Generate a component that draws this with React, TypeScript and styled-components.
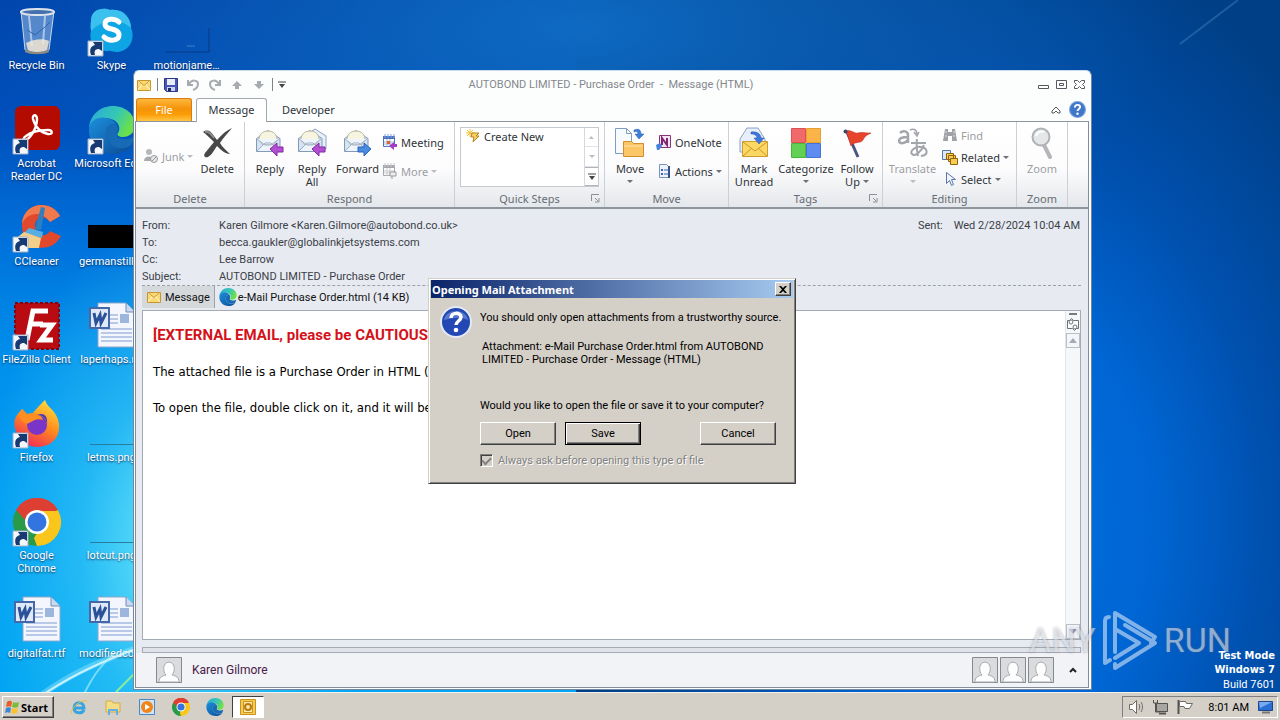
import React from "react";
import styled, { createGlobalStyle, css } from "styled-components";

const Global = createGlobalStyle`
  * { box-sizing: border-box; }
  html, body { margin: 0; height: 100%; overflow: hidden; }
  body, button, input { font-family: "Noto Sans", "Open Sans", sans-serif; font-size: 11px; line-height: 13px; }
  button { margin: 0; padding: 0; border: 0; background: none; color: inherit; cursor: default; }
  p, h1, h2, dl, dd, dt, ul { margin: 0; padding: 0; }
  svg { display: block; flex: none; }
`;
const tahoma = css`
  font-family: "Roboto", "Noto Sans", sans-serif;
`;

/* ---------- desktop ---------- */
const Screen = styled.div`
  height: 100vh;
  display: flex;
  flex-direction: column;
  overflow: hidden;
`;
const Desktop = styled.main`
  position: relative;
  flex: 1;
  min-height: 0;
  overflow: hidden;
  background:
    radial-gradient(ellipse 200px 330px at 180px 550px, rgba(120, 240, 250, 0.95), rgba(70, 212, 248, 0.5) 50%, rgba(30, 180, 245, 0) 100%),
    radial-gradient(ellipse 600px 240px at 45% 4%, rgba(14, 106, 194, 1), rgba(12, 98, 186, 0.6) 50%, rgba(10, 90, 180, 0) 100%),
    linear-gradient(180deg, #0044ac 0%, #0050bc 18%, #0070da 34%, #0090ec 52%, #009cf2 70%, #00a4f2 100%) left / 45% 100% no-repeat,
    radial-gradient(ellipse 420px 600px at 78% 75%, #0072e0 0%, #0066d4 36%, #0050ae 64%, #003f86 100%);
`;
const Streaks = styled.svg`
  position: absolute;
  left: 0;
  bottom: 0;
`;
const Beam = styled.svg`
  position: absolute;
  right: 0;
  top: 0;
`;
const IconColumns = styled.ul`
  height: 100%;
  display: grid;
  grid-auto-flow: column;
  grid-template-rows: repeat(7, 98px);
  grid-auto-columns: 75px;
  list-style: none;
`;
const Shortcut = styled.li`
  width: 73px;
  padding-top: 8px;
  display: flex;
  flex-direction: column;
  align-items: center;
  gap: 3px;
  color: #fff;
  text-align: center;
  white-space: pre;
  text-shadow: 0 1px 2px rgba(0, 20, 60, 0.8);
  ${tahoma}
`;
const Build = styled.div`
  position: absolute;
  right: 5px;
  bottom: 0;
  color: #fff;
  text-align: right;
  font-family: "DejaVu Sans Condensed", "DejaVu Sans", sans-serif;
  line-height: 14px;
  strong { display: block; }
  span { display: block; line-height: 15px; ${tahoma} }
`;
const Watermark = styled.div`
  position: absolute;
  right: 49px;
  bottom: 20px;
  display: flex;
  align-items: center;
  gap: 5px;
  color: rgba(255, 255, 255, 0.5);
  font: 34px/64px "Roboto", sans-serif;
  text-shadow: 0 0 3px rgba(90, 100, 120, 0.5);
  pointer-events: none;
`;

/* ---------- message window ---------- */
const MailWindow = styled.section`
  position: absolute;
  left: 133px;
  right: 188px;
  top: 70px;
  bottom: 2px;
  display: flex;
  flex-direction: column;
  background: #fcfdfd;
  border: 1px solid #6d87a5;
  border-top-color: #c9dcee;
  border-radius: 6px 6px 0 0;
  padding: 0 2px 1px 1px;
  overflow: hidden;
`;
const TitleBar = styled.header`
  height: 27px;
  flex: none;
  display: grid;
  grid-template-columns: 1fr auto 1fr;
  align-items: center;
  padding: 0 3px 1px 1px;
`;
const QuickAccess = styled.div`
  display: flex;
  align-items: center;
  gap: 6px;
  padding-top: 1px;
`;
const Divider = styled.i`
  width: 1px;
  height: 13px;
  margin: 0 -1px;
  background: #7d838b;
`;
const WindowTitle = styled.h1`
  font-size: 11px;
  font-weight: 400;
  color: #85888d;
  white-space: pre;
  ${tahoma}
`;
const WindowButtons = styled.div`
  justify-self: end;
  display: flex;
  gap: 5px;
`;
const TabRow = styled.nav`
  height: 24px;
  flex: none;
  display: flex;
  align-items: flex-end;
  gap: 4px;
  padding: 0 3px 0 1px;
  border-bottom: 1px solid #8e949c;
`;
const Tab = styled.button<{ $kind?: "file" | "active" }>`
  height: 23px;
  padding: 0 10px 2px;
  color: #2f3439;
  border: 1px solid transparent;
  border-bottom: 0;
  border-radius: 3px 3px 0 0;
  ${(p) => p.$kind === "file" && css`
    width: 56px;
    color: #fff;
    background: linear-gradient(#fdb73c, #f59309 45%, #fb9d06 70%, #ffc545);
    border-color: #d77b13;
  `}
  ${(p) => p.$kind === "active" && css`
    height: 24px;
    width: 71px;
    margin-bottom: -1px;
    background: #fff;
    border-color: #a4a9b0;
  `}
`;
const TabTools = styled.div`
  margin-left: auto;
  align-self: center;
  display: flex;
  align-items: center;
  gap: 8px;
`;
const Frame = styled.div`
  flex: 1;
  min-height: 0;
  display: flex;
  flex-direction: column;
  border: 1px solid #868d97;
  border-top: 0;
  background: #e7ebf1;
`;
const Ribbon = styled.div`
  height: 87px;
  flex: none;
  display: flex;
  overflow: hidden;
  background: linear-gradient(#ffffff, #fcfcfd 55%, #e4e7eb);
  border-bottom: 2px solid #8f959d;
`;
const Group = styled.section<{ $w: number }>`
  width: ${(p) => p.$w}px;
  flex: none;
  display: flex;
  flex-direction: column;
  border-right: 1px solid #ccd0d5;
`;
const GroupBody = styled.div<{ $gap?: number; $pad?: number }>`
  flex: 1;
  min-height: 0;
  display: flex;
  align-items: flex-start;
  gap: ${(p) => p.$gap ?? 4}px;
  padding: 5px ${(p) => p.$pad ?? 4}px 0;
`;
const GroupName = styled.h2`
  height: 16px;
  padding: 0 4px 1px;
  display: grid;
  grid-template-columns: 1fr auto 1fr;
  align-items: center;
  text-align: center;
  font-size: 11px;
  font-weight: 400;
  color: #676c73;
  span { grid-column: 2; }
  svg { justify-self: end; }
`;
const Big = styled.button<{ $w: number; $off?: boolean }>`
  width: ${(p) => p.$w}px;
  display: flex;
  flex-direction: column;
  align-items: center;
  gap: 3px;
  color: ${(p) => (p.$off ? "#9b9ea3" : "#303438")};
  white-space: nowrap;
`;
const BigLabel = styled.span`
  display: flex;
  flex-direction: column;
  align-items: center;
`;
const Inline = styled.span`
  display: flex;
  align-items: center;
  gap: 3px;
`;
const SmallStack = styled.div<{ $gap: number; $top: number }>`
  display: flex;
  flex-direction: column;
  align-items: flex-start;
  gap: ${(p) => p.$gap}px;
  padding-top: ${(p) => p.$top}px;
`;
const Small = styled.button<{ $off?: boolean }>`
  height: 16px;
  display: flex;
  align-items: center;
  gap: 3px;
  color: ${(p) => (p.$off ? "#9b9ea3" : "#303438")};
  white-space: nowrap;
`;
const Caret = styled.i<{ $off?: boolean }>`
  border: 3px solid transparent;
  border-top-color: ${(p) => (p.$off ? "#b9bcc0" : "#6b7077")};
  border-bottom: 0;
`;
const CaretRow = styled.span`
  height: 13px;
  display: grid;
  place-content: center;
`;
const Gallery = styled.div`
  flex: 1;
  height: 60px;
  display: flex;
  background: #fff;
  border: 1px solid #c6cacf;
`;
const GalleryItem = styled.div`
  flex: 1;
  padding: 0 4px;
`;
const GallerySide = styled.div`
  width: 14px;
  display: grid;
  grid-template-rows: repeat(3, 1fr);
  border-left: 1px solid #d5d8dc;
`;
const GalleryArrow = styled.button<{ $on?: boolean }>`
  display: grid;
  place-content: center;
  border-bottom: 1px solid ${(p) => (p.$on ? "#b0b5bb" : "#e1e3e6")};
  border-top: 1px solid ${(p) => (p.$on ? "#b0b5bb" : "transparent")};
`;

const Envelope = styled.div`
  flex: none;
  display: flex;
  justify-content: space-between;
  margin: 0 7px 0 6px;
  padding: 8px 1px 0 0;
  color: #3b4048;
  line-height: 17px;
  border-bottom: 1px dashed #9ba1aa;
  ${tahoma}
`;
const Fields = styled.dl`
  display: grid;
  grid-template-columns: 77px auto;
`;
const Sent = styled.p`
  display: flex;
  gap: 11px;
  white-space: nowrap;
`;
const Attachments = styled.div`
  flex: none;
  height: 24px;
  margin: 0 6px;
  display: flex;
  color: #111;
`;
const AttachTab = styled.button<{ $on?: boolean }>`
  height: 22px;
  display: flex;
  align-items: center;
  gap: ${(p) => (p.$on ? 3 : 1)}px;
  padding: 0 4px;
  background: ${(p) => (p.$on ? "#d5d9dc" : "transparent")};
  border-right: 1px solid ${(p) => (p.$on ? "#9ba1aa" : "transparent")};
  white-space: nowrap;
  ${tahoma}
`;
const Reading = styled.div`
  flex: 1;
  min-height: 0;
  margin: 0 7px 0 6px;
  display: flex;
  background: #fff;
  border: 1px solid #a5abb5;
`;
const Article = styled.article`
  flex: 1;
  padding: 14px 10px;
  color: #000;
  font-family: "DejaVu Sans Condensed", "DejaVu Sans", sans-serif;
  font-size: 13px;
  line-height: 18px;
  white-space: nowrap;
  overflow: hidden;
  p { margin-bottom: 18px; }
`;
const Caution = styled.p`
  color: #d3121a;
  font: bold 15px/20px "Roboto", Arial, sans-serif;
`;
const Scroll = styled.div`
  width: 15px;
  display: flex;
  flex-direction: column;
  align-items: center;
  background: #f6f7f9;
  border-left: 1px solid #e3e5e9;
`;
const ScrollKnob = styled.button`
  width: 14px;
  height: 15px;
  display: grid;
  place-content: center;
  background: #f4f6f9;
  border: 1px solid #b9bfc9;
`;
const Spacer = styled.div`
  flex: 1;
`;
const Splitter = styled.div`
  flex: none;
  height: 6px;
  margin: 7px 7px 0 6px;
  border: 1px solid #a5abb5;
  background: #dfe3e9;
`;
const People = styled.footer`
  flex: none;
  height: 34px;
  display: flex;
  align-items: center;
  gap: 2px;
  padding: 0 7px 0 20px;
  background: #f1f3f6;
  color: #4a1a4a;
  span { margin-left: 8px; font-size: 12px; ${tahoma} }
  button { width: 16px; margin-left: 9px; display: grid; place-content: center; }
`;

/* ---------- dialog ---------- */
const Dialog = styled.section`
  position: absolute;
  left: 428px;
  top: 278px;
  width: 368px;
  padding: 1px 1px 16px;
  background: #d4d0c8;
  border: 1px solid;
  border-color: #d4d0c8 #404040 #404040 #d4d0c8;
  box-shadow: inset 1px 1px #fff, inset -1px -1px #808080;
  color: #000;
`;
const DialogTitle = styled.header`
  height: 18px;
  display: flex;
  align-items: center;
  justify-content: space-between;
  margin: 0 1px 2px;
  padding: 0 2px 0 1px;
  color: #fff;
  font-weight: 700;
  background: linear-gradient(90deg, #0a246a, #a6caf0);
`;
const raised = css`
  background: #d4d0c8;
  border: 1px solid;
  border-color: #fff #404040 #404040 #fff;
  box-shadow: inset -1px -1px #808080;
`;
const CloseBox = styled.button`
  width: 16px;
  height: 14px;
  display: grid;
  place-content: center;
  ${raised}
`;
const DialogBody = styled.div`
  display: grid;
  grid-template-columns: 32px minmax(0, 1fr);
  column-gap: 8px;
  padding: 6px 18px 0 10px;
  ${tahoma}
`;
const Copy = styled.div`
  padding-top: 5px;
  p { white-space: nowrap; }
`;
const Attached = styled.div`
  height: 42px;
  margin: 16px 10px 17px 2px;
`;
const Actions = styled.div`
  display: flex;
  gap: 9px;
  margin-top: 10px;
`;
const ClassicButton = styled.button<{ $focus?: boolean; $end?: boolean }>`
  width: 76px;
  height: 23px;
  ${tahoma}
  ${raised}
  ${(p) => p.$focus && css`border-color: #000; box-shadow: inset 1px 1px #fff, inset -1px -1px #404040, inset -2px -2px #808080;`}
  ${(p) => p.$end && css`margin-left: auto;`}
`;
const Ask = styled.label`
  display: flex;
  align-items: center;
  gap: 5px;
  margin-top: 9px;
  color: #808080;
  text-shadow: 1px 1px #fff;
  input {
    appearance: none;
    width: 13px;
    height: 13px;
    margin: 0;
    display: grid;
    place-content: center;
    border: 1px solid;
    border-color: #808080 #fff #fff #808080;
    box-shadow: inset 1px 1px #404040;
  }
  input::before {
    content: "";
    width: 7px;
    height: 4px;
    margin-bottom: 1px;
    border: solid #808080;
    border-width: 0 0 2px 2px;
    transform: rotate(-45deg);
  }
`;

/* ---------- taskbar ---------- */
const Taskbar = styled.footer`
  flex: none;
  height: 28px;
  display: flex;
  align-items: center;
  padding: 1px 2px 0;
  background: #d4d0c8;
  border-top: 1px solid #f4f2ec;
`;
const Start = styled.button`
  width: 52px;
  height: 22px;
  display: flex;
  align-items: center;
  gap: 1px;
  padding-left: 1px;
  margin-right: 8px;
  font-weight: 700;
  ${raised}
`;
const Task = styled.button<{ $on?: boolean }>`
  width: ${(p) => (p.$on ? 32 : 34)}px;
  height: 22px;
  display: grid;
  place-content: center;
  ${(p) => p.$on && css`
    background: #fff;
    border: 1px solid;
    border-color: #404040 #fff #fff #404040;
  `}
`;
const Tray = styled.div`
  height: 22px;
  margin-left: auto;
  display: flex;
  align-items: center;
  gap: 7px;
  padding: 0 2px 0 5px;
  border: 1px solid;
  border-color: #808080 #fff #fff #808080;
  ${tahoma}
  time { margin: 0 1px 0 8px; }
`;

/* ---------- drawings ---------- */
const Arrow = () => (
  <g>
    <path d="M0 33h15v15H0z" fill="#f4f7fb" stroke="#9db0c8" />
    <path d="M3 47c-2-6 0-9 4-10l-2-3h9v9l-3-2c-4 0-5 2-4 6z" fill="#173a72" />
  </g>
);
const D = ({ children, link }: { children?: React.ReactNode; link?: boolean }) => (
  <svg width="48" height="48" viewBox="0 0 48 48" overflow="visible" aria-hidden="true">
    {children}
    {link && <Arrow />}
  </svg>
);
const EdgeShape = ({ id }: { id: string }) => (
  <g>
    <defs>
      <linearGradient id={id + "a"} x1="0" y1="0" x2="1" y2=".4">
        <stop offset="0" stopColor="#2aa7dc" /><stop offset=".6" stopColor="#35c7b6" /><stop offset="1" stopColor="#6be04a" />
      </linearGradient>
      <linearGradient id={id + "b"} x1="0" y1="0" x2="1" y2="1">
        <stop offset="0" stopColor="#1c8fdc" /><stop offset="1" stopColor="#0c4a94" />
      </linearGradient>
    </defs>
    <path d="M1 22C2 9 12 0 25 0c13 0 22 9 22 19 0 8-6 12-12 12-4 0-7-2-5-4 3-4 1-12-7-14C14 10 4 14 1 22z" fill={`url(#${id}a)`} />
    <path d="M1 22c1-8 10-12 18-10 5 1 8 4 9 6-7-1-11 5-10 11 1 8 8 14 18 13 3 0 6-2 8-3-4 6-11 9-19 9C11 48 0 37 1 22z" fill={`url(#${id}b)`} />
    <path d="M18 29c-1-6 2-11 10-11 3 4 2 7 1 9-1 3 1 6 8 6 4 0 6-1 9-2-1 5-3 9-6 10-11 4-21-3-22-12z" fill="#176bb5" />
  </g>
);
const ChromeShape = () => (
  <g>
    <path d="M24 24 3.200 12A24 24 0 0 1 44.800 12z" fill="#dd4032" />
    <path d="M24 24 44.800 12A24 24 0 0 1 24 48z" fill="#fbc61c" />
    <path d="M24 24 24 48A24 24 0 0 1 3.200 12z" fill="#2a9a48" />
    <path d="M24 13h20.800L34 30 24 48l-3-8 9-14z" fill="#fbc61c" />
    <path d="M3.200 12A24 24 0 0 1 44.800 12H24l-10 12z" fill="#dd4032" />
    <circle cx="24" cy="24" r="12" fill="#fff" /><circle cx="24" cy="24" r="9.500" fill="#3374e0" />
  </g>
);
const WordDoc = () => (
  <D>
    <path d="M10 1h28l9 9v35H10z" fill="#f3f7fd" stroke="#8fa6cc" />
    <path d="M38 1v9h9" fill="#cbd9ef" stroke="#6f8cbc" />
    <path d="M22 13h8M22 17h8M22 21h8M13 27h31M13 31h31M13 35h31M13 39h31" stroke="#7d9bd0" />
    <path d="M32 12h9v9h-9z" fill="#9db6de" />
    <path d="M2 6h19v20H2z" fill="#dfe9f8" stroke="#4668a8" strokeWidth="2" />
    <path d="M6 11l2 10 4-8 1 8 5-10" fill="none" stroke="#2b519b" strokeWidth="3" />
  </D>
);
const Bin = () => (
  <D>
    <path d="M8 3l4 39c4 4 20 4 24 0l5-39z" fill="#a9c6e6" fillOpacity=".5" stroke="#c7d7e8" />
    <path d="M13 35l2 7c5 3 13 3 19 0l2-9c-6-3-15-2-23 2z" fill="#dcd8d0" />
    <path d="M12 41c4 4 20 4 24 0v3c-5 3-19 3-24 0z" fill="#8c8a80" />
    <path d="M16 8l3 30M32 8l-2 28" stroke="#e5eff8" strokeOpacity=".6" strokeWidth="2" />
    <path d="M14 22l8 5 10-8 5-5" stroke="#2d66b4" fill="none" />
    <ellipse cx="24.500" cy="4" rx="16.500" ry="3" fill="#456fae" stroke="#dce3ea" strokeWidth="2" />
  </D>
);
const Skype = () => (
  <D link>
    <path d="M3 13C3 1 15-1 22 2c13-2 21 8 21 18 4 8 1 22-13 24-6 0-8-2-10-1C8 43 0 34 3 23c-1-4-1-7 0-10z" fill="#0ea5e5" />
    <path d="M3 13C3 1 15-1 22 2c13-2 21 8 21 18C30 8 14 12 3 23z" fill="#3cc0ee" />
    <path d="M31 14c-4-4-14-4-14 2 0 7 14 3 14 11 0 6-10 7-15 2" fill="none" stroke="#fff" strokeWidth="5" strokeLinecap="round" />
  </D>
);
const Acrobat = () => (
  <D link>
    <rect x="2" y="0" width="45" height="44" rx="6" fill="#b30b00" />
    <path d="M12 34c4 0 12-11 12-21 0-5-5-5-4 0 2 8 8 14 15 15 5 1 5-4 0-4-9 0-17 2-22 6-3 2-3 4-1 4z" fill="none" stroke="#fff" strokeWidth="2.400" />
  </D>
);
const CCleaner = () => (
  <D link>
    <path d="M47 12C38-5 10-2 9 20c-1 24 28 33 39 12l-11-5c-5 8-15 4-15-5 0-10 11-11 15-4z" fill="#e2492c" />
    <path d="M47 12C38-5 10-2 9 20c5-12 20-14 28-2z" fill="#f07a4e" />
    <path d="M28 3l4 1-4 22-6-1z" fill="#2e7fbd" /><path d="M16 24l14 4-1 6-18-5z" fill="#58aee0" />
    <path d="M11 28l17 6-2 10H12L1 36z" fill="#f2d08c" />
  </D>
);
const FileZilla = () => (
  <D link>
    <path d="M2 1h44v46H2z" fill="#b90b12" stroke="#8d0006" strokeWidth="2" strokeDasharray="3 2" />
    <path d="M14 38 20 9h15M17 22h13" fill="none" stroke="#fff" strokeWidth="5" />
    <path d="M27 23h12L28 38h12" fill="none" stroke="#fff" strokeWidth="5" />
  </D>
);
const Firefox = () => (
  <D link>
    <defs><linearGradient id="ff" x1=".8" y1="0" x2=".3" y2="1"><stop offset="0" stopColor="#ffe03c" /><stop offset=".5" stopColor="#ff8a1e" /><stop offset="1" stopColor="#f0285a" /></linearGradient></defs>
    <path d="M9 9l5 5 6-1c2-3 7-8 12-13 2 6 6 8 9 12 6 8 7 18 2 26-8 12-30 12-37-1C-1 27 1 17 5 14z" fill="url(#ff)" />
    <circle cx="24" cy="25" r="10" fill="#7a35c8" />
    <path d="M5 14l4-5 5 5c8-2 14 0 16 6-6-2-10 1-14 3-3 2-7-1-11-9z" fill="#ff8e22" />
    <path d="M24 15c6 0 10 5 10 10 1-8-2-13-10-10z" fill="#4f3cb8" />
  </D>
);
const Chrome = () => <D link><ChromeShape /></D>;
const Edge = () => <D link><EdgeShape id="ed" /></D>;
const Black = () => <D><path d="M0 21h48v23H0z" fill="#000" /></D>;
const Faint = () => <D><path d="M2 44h44V20" fill="none" stroke="#083a86" /><path d="M24 38h8" stroke="#3f7fd0" /></D>;
const Rule = () => <D><path d="M2 44.500h46" stroke="#2a7c9c" /></D>;

const Mail16 = () => (
  <svg width="16" height="16" aria-hidden="true">
    <path d="M1.500 3.500h13v10h-13z" fill="#fbd970" stroke="#c7962f" />
    <path d="M2 4l6 5 6-5M2 13l4-5M14 13l-4-5" fill="none" stroke="#fff8dc" /><path d="M2 3.500l6 5 6-5" fill="none" stroke="#c7962f" />
  </svg>
);
const Env = ({ back, fwd }: { back?: boolean; fwd?: boolean }) => (
  <svg width="32" height="32" aria-hidden="true">
    {back && <path d="M9 9l10-7 11 7v13H12z" fill="#e8f0f9" stroke="#8ea4c0" />}
    <path d="M2.500 11.500 14 3.500l12 8v13h-23.500z" fill="#d6e3f3" stroke="#8199bb" />
    <path d="M5 13c0-5 3-9 9-9s9 4 9 9l-4 5H9z" fill="#f7f4df" stroke="#b9b79d" />
    <path d="M3 24l8-8h6l8 8M3 12l8 6h6l8-6" fill="#edf4fb" stroke="#9cb1cc" />
    {fwd
      ? <path d="M16 20h6v-4l7 6-7 7v-4h-6z" fill="#4a8de0" stroke="#2a62b8" />
      : <path d="M29 20h-6v-4l-7 6 7 7v-4h6z" fill="#b14fd0" stroke="#8427a8" />}
  </svg>
);
const DeleteX = () => (
  <svg width="32" height="32" aria-hidden="true">
    <path d="M2 5c4-3 8-1 11 4l3 4C21 7 26 3 31 1c-4 5-9 10-12 15 3 5 7 8 10 11-5 0-9-4-13-8-3 4-5 9-9 11-3 1-5-1-3-4 3-4 6-7 9-11C9 11 6 8 2 5z" fill="#484848" />
    <path d="M4 5c4-1 7 3 9 6" stroke="#8d8d8d" strokeWidth="2" fill="none" />
  </svg>
);
const Junk = () => (
  <svg width="16" height="16" aria-hidden="true"><circle cx="6" cy="4" r="3" fill="#b6b8bb" /><path d="M1 13c0-6 9-6 9 0z" fill="#a8aaad" /><circle cx="11" cy="11" r="3.500" fill="#e6e7e8" stroke="#96989b" /><path d="M8.500 13.500l5-5" stroke="#96989b" /></svg>
);
const Cal = ({ off }: { off?: boolean }) => (
  <svg width="16" height="16" aria-hidden="true">
    <path d="M1.500 2.500h11v10h-11z" fill="#fff" stroke={off ? "#a4a6a9" : "#4a72bd"} />
    <path d="M1 2h12v3H1z" fill={off ? "#a4a6a9" : "#4a72bd"} /><path d="M3 0v4M6 0v4M9 0v4M12 0v4" stroke={off ? "#c8c9cb" : "#7fa3dd"} />
    <path d="M2 8h10M2 10h10M5 5v8M8 5v8" stroke={off ? "#c8c9cb" : "#9fb7dd"} />
    {off ? <path d="M8 9h6v4H8zM10 13v3" fill="#eee" stroke="#97999c" /> : <><path d="M5 7h3v3H5z" fill="#e0622c" /><path d="M15 10h-3V8l-5 4 5 4v-3h3z" fill="#a53cc4" /></>}
  </svg>
);
const Floppy = () => (
  <svg width="16" height="16" aria-hidden="true"><path d="M1.500 1.500h13v13h-11l-2-2z" fill="#4a55b8" stroke="#2d3687" /><path d="M4 2h8v6H4z" fill="#e8edf8" /><path d="M4 10h8v4H4z" fill="#c9d2ea" /><path d="M5 11h3v3H5z" fill="#1f2866" /></svg>
);
const Undo = ({ flip }: { flip?: boolean }) => (
  <svg width="16" height="16" aria-hidden="true"><g transform={flip ? "translate(16) scale(-1 1)" : undefined}><path d="M3 3v5h5M4 7c3-5 9-4 9 0 0 3-2 5-5 6" fill="none" stroke="#a7aaae" strokeWidth="2" /></g></svg>
);
const Tri = ({ down }: { down?: boolean }) => (
  <svg width="16" height="16" aria-hidden="true"><path d={down ? "M6 4h4v3h3l-5 5-5-5h3z" : "M6 12h4V9h3L8 4 3 9h3z"} fill="#a7aaae" /></svg>
);
const More = () => <svg width="8" height="7" aria-hidden="true"><path d="M0 1h8" stroke="#444" /><path d="M1 3h6L4 7z" fill="#444" /></svg>;
const MoveIcon = () => (
  <svg width="32" height="32" aria-hidden="true"><path d="M1.500 1.500h11l5 5v20h-16z" fill="#f8fbfe" stroke="#7f9cc4" /><path d="M12.500 1.500v5h5" fill="none" stroke="#7f9cc4" /><path d="M9.500 29.500v-15h8l2 2h10v13z" fill="#fbc766" stroke="#d08f2b" /><path d="M10 19h19" stroke="#fde3ac" /><path d="M20 3c5-2 7 0 7 4h3l-5 5-4-5h3c0-2-1-3-4-2z" fill="#3d7fd8" stroke="#2459ac" strokeWidth=".5" /></svg>
);
const OneNote = () => (
  <svg width="16" height="16" aria-hidden="true"><path d="M3.500 1.500h11v12h-11z" fill="#f5e3f2" stroke="#84357c" /><path d="M6 11V4l5 7V4" fill="none" stroke="#7c2674" strokeWidth="2" /><path d="M0 11l4-2 2 3-3 4H1z" fill="#4682dc" /></svg>
);
const ActionsIcon = () => (
  <svg width="16" height="16" aria-hidden="true"><path d="M3.500 1.500h7l3 3v10h-10z" fill="#eef3fb" stroke="#7a93bd" /><path d="M5 6h2v2H5zM5 10h2v2H5z" fill="#3b64ae" /><path d="M8 7h4M8 11h4" stroke="#3b64ae" /><path d="M13 3v12" stroke="#31518c" strokeWidth="2" /></svg>
);
const Unread = () => (
  <svg width="32" height="32" aria-hidden="true"><path d="M2 12 9 1h11l7 11v13H2z" fill="#e7effa" stroke="#8ca2c4" /><path d="M4.500 14.500h25v15h-25z" fill="#fbd764" stroke="#cf9c30" /><path d="M5 15l12 9 12-9M5 29l9-8M29 29l-9-8" fill="none" stroke="#c9952c" /><path d="M13 5c7-1 10 3 10 6h3l-5 6-5-6h3c0-2-2-4-6-4z" fill="#3f78dc" stroke="#244fa8" strokeWidth=".5" /></svg>
);
const Categories = () => (
  <svg width="32" height="32" aria-hidden="true"><path d="M1.500 1.500h14v14h-14z" fill="#f0696b" stroke="#e04f52" /><path d="M16.500 1.500h14v14h-14z" fill="#fbb447" stroke="#e5a033" /><path d="M1.500 16.500h14v14h-14z" fill="#62cf55" stroke="#48b53d" /><path d="M16.500 16.500h14v14h-14z" fill="#5f8cf0" stroke="#4673d9" /></svg>
);
const Flag = () => (
  <svg width="32" height="32" aria-hidden="true"><path d="M6 5l11 25" stroke="#4a567e" strokeWidth="3" /><path d="M5 4c5-2 8 3 12 2 4-1 6 0 13 0-4 2-6 3-8 7-3 4-9 1-12 6z" fill="#e8432b" stroke="#b52617" strokeWidth=".5" /><circle cx="4.500" cy="4.500" r="2" fill="#39456c" /></svg>
);
const TranslateIcon = () => (
  <svg width="32" height="32" aria-hidden="true"><g fill="none" stroke="#a2a5a9" strokeWidth="2.500"><path d="M3 6c3-3 8-2 8 2v8M11 10c-5 0-9 1-9 4s6 3 9-1" /><path d="M14 16h15M20 12c-1 6 0 12 1 17M27 18c-3 7-9 12-12 9s4-8 9-7c7 1 8 8 0 9" strokeWidth="2" /><path d="M13 3c4-2 7 0 7 4M17 5l3 4 2-4" strokeWidth="1.500" /></g></svg>
);
const Find = () => (
  <svg width="16" height="16" aria-hidden="true"><path d="M3 2h3v3h4V2h3l2 12h-5V9H6v5H1z" fill="#9fa2a6" /><path d="M3 9h2M11 9h2M4 4v2M12 4v2" stroke="#ddd" /></svg>
);
const RelatedIcon = () => (
  <svg width="16" height="16" aria-hidden="true"><path d="M.500 1.500h8v9h-8z" fill="#dbe7f8" stroke="#5778ac" /><path d="M4.500 4.500h7v6h-7zM6.500 6.500h7v6h-7z" fill="#f9cc50" stroke="#8e6410" /><path d="M8.500 9.500h7v6h-7z" fill="#f9cc50" stroke="#8e6410" /></svg>
);
const Pointer = () => <svg width="16" height="16" aria-hidden="true"><path d="M4.500 1.500v11l3-3 2 5 2-1-2-5h4z" fill="#eef3fc" stroke="#5b77aa" /></svg>;
const Magnifier = () => (
  <svg width="32" height="32" aria-hidden="true"><path d="M18 18l6 12" stroke="#b4b6b9" strokeWidth="4" strokeLinecap="round" /><circle cx="15" cy="10" r="8.500" fill="#e4e6e8" stroke="#b0b3b6" strokeWidth="2" /><path d="M10 9c1-4 5-5 8-4" stroke="#fff" strokeWidth="2" fill="none" /></svg>
);
const Wand = () => (
  <svg width="16" height="16" aria-hidden="true"><path d="M5 1v8M1 5h8M2 2l6 6M8 2 2 8" stroke="#f0c02c" /><path d="M7 5h7l-3 3h3l-6 6 1-5H6z" fill="#fbd35c" stroke="#b98325" /></svg>
);
const Launcher = () => <svg width="9" height="9" aria-hidden="true"><path d="M.5 7V.5H8M4 4l3 3M8 4v4H4" fill="none" stroke="#8c9198" /></svg>;
const Person = () => (
  <svg width="26" height="26" aria-hidden="true"><path d="M.5.5h25v25H.500z" fill="#d9dbdd" stroke="#85888d" /><path d="M3 25c0-5 3-6 7-7-3-3-4-12 3-13 7 1 6 10 3 13 4 1 7 2 7 7z" fill="#fdfdfd" stroke="#a9acb0" /></svg>
);
const Question = ({ size, classic }: { size: number; classic?: boolean }) => (
  <svg width={size} height={size} viewBox="0 0 32 32" aria-hidden="true">
    <circle cx="16" cy="16" r="15" fill={classic ? "#2348b4" : "#3f77c9"} stroke={classic ? "#e4e9f4" : "#7ea6de"} strokeWidth="2" />
    {classic && <path d="M4 14C6 2 26 2 28 14c-8-4-16-2-24 0z" fill="#6f8fdc" opacity=".7" />}
    <path d="M11 12c0-6 10-6 10-1 0 4-5 4-5 8" fill="none" stroke="#fff" strokeWidth="3.500" /><circle cx="16" cy="24" r="2.300" fill="#fff" />
  </svg>
);
const Mini = ({ children, box = 48 }: { children: React.ReactNode; box?: number }) => (
  <svg width="18" height="18" viewBox={`0 0 ${box} ${box}`} aria-hidden="true">{children}</svg>
);

const shortcuts: [string, React.FC][] = [
  ["Recycle Bin", Bin], ["Acrobat\nReader DC", Acrobat], ["CCleaner", CCleaner], ["FileZilla Client", FileZilla],
  ["Firefox", Firefox], ["Google\nChrome", Chrome], ["digitalfat.rtf", WordDoc],
  ["Skype", Skype], ["Microsoft Edge", Edge], ["germanstill.…", Black], ["laperhaps.rtf", WordDoc],
  ["letms.png", Rule], ["lotcut.png", Rule], ["modifiedcol…", WordDoc],
  ["motionjame…", Faint],
];

const BigButton = ({ w, icon, lines, caret, off }: { w: number; icon: React.ReactNode; lines: string[]; caret?: "below" | "inline"; off?: boolean }) => (
  <Big $w={w} $off={off} disabled={off}>
    {icon}
    <BigLabel>
      {lines.map((l, i) => (
        <Inline key={l}>{l}{caret === "inline" && i === lines.length - 1 && <Caret />}</Inline>
      ))}
      {caret === "below" && <CaretRow><Caret $off={off} /></CaretRow>}
    </BigLabel>
  </Big>
);

export default function App() {
  return (
    <Screen>
      <Global />
      <Desktop>
        <Streaks width="160" height="80" aria-hidden="true">
          <path d="M40 84C70 62 100 48 160 28" fill="none" stroke="#b8f4ff" strokeOpacity=".35" strokeWidth="6" />
          <path d="M44 82C74 62 104 48 160 28" fill="none" stroke="#e2fbff" strokeOpacity=".8" strokeWidth="2" />
          <path d="M84 82c10-20 18-30 30-40" fill="none" stroke="#b8f4ff" strokeOpacity=".6" strokeWidth="2" />
          <path d="M116 80l20-20" stroke="#8bec9a" strokeWidth="2" />
        </Streaks>
        <Beam width="110" height="60" aria-hidden="true">
          <path d="M10 44 68 0" stroke="#5a95cf" strokeOpacity=".35" strokeWidth="2" />
        </Beam>
        <IconColumns>
          {shortcuts.map(([name, Icon]) => (
            <Shortcut key={name}><Icon /><span>{name}</span></Shortcut>
          ))}
        </IconColumns>

        <MailWindow aria-label="Message">
          <TitleBar>
            <QuickAccess>
              <Mail16 /><Divider /><Floppy /><Undo /><Undo flip /><Tri /><Tri down /><Divider /><More />
            </QuickAccess>
            <WindowTitle>AUTOBOND LIMITED - Purchase Order  -  Message (HTML)</WindowTitle>
            <WindowButtons>
              <button aria-label="Minimize"><svg width="13" height="11"><path d="M1.500 6.500h10v3h-10z" fill="#fff" stroke="#55595f" /></svg></button>
              <button aria-label="Maximize"><svg width="13" height="11"><path d="M1.500 1.500h10v8h-10zM4.500 4.500h4v2h-4z" fill="#fff" stroke="#55595f" /></svg></button>
              <button aria-label="Close"><svg width="13" height="11"><path d="M1.500 1.500h3l2 2 2-2h3v2l-2 2 2 2v2h-3l-2-2-2 2h-3v-2l2-2-2-2z" fill="#fff" stroke="#55595f" /></svg></button>
            </WindowButtons>
          </TitleBar>
          <TabRow>
            <Tab $kind="file">File</Tab>
            <Tab $kind="active">Message</Tab>
            <Tab>Developer</Tab>
            <TabTools>
              <button aria-label="Collapse ribbon"><svg width="10" height="8"><path d="M1 5l4-4 4 4v2H7L5 5 3 7H1z" fill="#fff" stroke="#55595f" /></svg></button>
              <button aria-label="Help"><Question size={17} /></button>
            </TabTools>
          </TabRow>
          <Frame>
            <Ribbon>
              <Group $w={109}>
                <GroupBody $gap={4} $pad={7}>
                  <SmallStack $gap={0} $top={21}><Small $off disabled><Junk />Junk<Caret $off /></Small></SmallStack>
                  <BigButton w={46} icon={<DeleteX />} lines={["Delete"]} />
                </GroupBody>
                <GroupName><span>Delete</span></GroupName>
              </Group>
              <Group $w={210}>
                <GroupBody $gap={0}>
                  <BigButton w={42} icon={<Env />} lines={["Reply"]} />
                  <BigButton w={42} icon={<Env back />} lines={["Reply", "All"]} />
                  <BigButton w={49} icon={<Env fwd />} lines={["Forward"]} />
                  <SmallStack $gap={13} $top={7}>
                    <Small><Cal />Meeting</Small>
                    <Small $off disabled><Cal off />More <Caret $off /></Small>
                  </SmallStack>
                </GroupBody>
                <GroupName><span>Respond</span></GroupName>
              </Group>
              <Group $w={150}>
                <GroupBody $pad={5}>
                  <Gallery>
                    <GalleryItem><Small><Wand />Create New</Small></GalleryItem>
                    <GallerySide>
                      <GalleryArrow aria-label="Previous"><svg width="5" height="3"><path d="M0 3l2-3 3 3z" fill="#b9bcc0" /></svg></GalleryArrow>
                      <GalleryArrow aria-label="Next"><Caret $off /></GalleryArrow>
                      <GalleryArrow $on aria-label="More steps"><More /></GalleryArrow>
                    </GallerySide>
                  </Gallery>
                </GroupBody>
                <GroupName><span>Quick Steps</span><Launcher /></GroupName>
              </Group>
              <Group $w={124}>
                <GroupBody $gap={5}>
                  <BigButton w={42} icon={<MoveIcon />} lines={["Move"]} caret="below" />
                  <SmallStack $gap={13} $top={7}>
                    <Small><OneNote />OneNote</Small>
                    <Small><ActionsIcon />Actions <Caret /></Small>
                  </SmallStack>
                </GroupBody>
                <GroupName><span>Move</span></GroupName>
              </Group>
              <Group $w={154}>
                <GroupBody $gap={2}>
                  <BigButton w={42} icon={<Unread />} lines={["Mark", "Unread"]} />
                  <BigButton w={58} icon={<Categories />} lines={["Categorize"]} caret="below" />
                  <BigButton w={40} icon={<Flag />} lines={["Follow", "Up"]} caret="inline" />
                </GroupBody>
                <GroupName><span>Tags</span><Launcher /></GroupName>
              </Group>
              <Group $w={134}>
                <GroupBody $gap={4}>
                  <BigButton w={51} icon={<TranslateIcon />} lines={["Translate"]} caret="below" off />
                  <SmallStack $gap={6} $top={0}>
                    <Small $off disabled><Find />Find</Small>
                    <Small><RelatedIcon />Related <Caret /></Small>
                    <Small><Pointer />Select <Caret /></Small>
                  </SmallStack>
                </GroupBody>
                <GroupName><span>Editing</span></GroupName>
              </Group>
              <Group $w={51}>
                <GroupBody><BigButton w={42} icon={<Magnifier />} lines={["Zoom"]} off /></GroupBody>
                <GroupName><span>Zoom</span></GroupName>
              </Group>
            </Ribbon>
            <Envelope>
              <Fields>
                <dt>From:</dt><dd>Karen Gilmore &lt;Karen.Gilmore@autobond.co.uk&gt;</dd>
                <dt>To:</dt><dd>becca.gaukler@globalinkjetsystems.com</dd>
                <dt>Cc:</dt><dd>Lee Barrow</dd>
                <dt>Subject:</dt><dd>AUTOBOND LIMITED - Purchase Order</dd>
              </Fields>
              <Sent><span>Sent:</span><span>Wed 2/28/2024 10:04 AM</span></Sent>
            </Envelope>
            <Attachments>
              <AttachTab $on><Mail16 />Message</AttachTab>
              <AttachTab><Mini><EdgeShape id="ea" /></Mini>e-Mail Purchase Order.html (14 KB)</AttachTab>
            </Attachments>
            <Reading>
              <Article>
                <Caution>[EXTERNAL EMAIL, please be CAUTIOUS]</Caution>
                <p>The attached file is a Purchase Order in HTML (</p>
                <p>To open the file, double click on it, and it will be</p>
              </Article>
              <Scroll>
                <svg width="14" height="22" aria-hidden="true"><path d="M3 2h8v2H3z" fill="#777c84" /><path d="M1.500 9.500h2l2-2 2 2h5v8h-2l-2 2-2-2h-5z" fill="#fff" stroke="#6d7279" /><circle cx="5" cy="11" r="2" fill="none" stroke="#6d7279" /><circle cx="9" cy="16" r="2" fill="none" stroke="#6d7279" /></svg>
                <ScrollKnob aria-label="Scroll up"><svg width="8" height="5"><path d="M0 5l4-5 4 5z" fill="#a5abb5" /></svg></ScrollKnob>
                <Spacer />
                <ScrollKnob aria-label="Scroll down"><svg width="8" height="5"><path d="M0 0l4 5 4-5z" fill="#8f97b8" /></svg></ScrollKnob>
              </Scroll>
            </Reading>
            <Splitter />
            <People>
              <Person /><span>Karen Gilmore</span><Spacer /><Person /><Person /><Person />
              <button aria-label="Expand people pane"><svg width="8" height="6"><path d="M1 5l3-3 3 3" fill="none" stroke="#222" strokeWidth="2" /></svg></button>
            </People>
          </Frame>
        </MailWindow>

        <Dialog role="dialog" aria-label="Opening Mail Attachment">
          <DialogTitle>
            Opening Mail Attachment
            <CloseBox aria-label="Close"><svg width="8" height="7"><path d="M0 0h2l2 2 2-2h2L5 3.500 8 7H6L4 5 2 7H0l3-3.500z" fill="#000" /></svg></CloseBox>
          </DialogTitle>
          <DialogBody>
            <Question size={32} classic />
            <Copy>
              <p>You should only open attachments from a trustworthy source.</p>
              <Attached>Attachment: e-Mail Purchase Order.html from AUTOBOND LIMITED - Purchase Order - Message (HTML)</Attached>
              <p>Would you like to open the file or save it to your computer?</p>
              <Actions>
                <ClassicButton>Open</ClassicButton>
                <ClassicButton $focus>Save</ClassicButton>
                <ClassicButton $end>Cancel</ClassicButton>
              </Actions>
              <Ask><input type="checkbox" checked disabled readOnly />Always ask before opening this type of file</Ask>
            </Copy>
          </DialogBody>
        </Dialog>

        <Watermark>
          <span>ANY</span>
          <svg width="58" height="64" fill="none" stroke="currentColor" strokeWidth="4" strokeLinejoin="round" strokeLinecap="round" aria-hidden="true">
            <path d="M8 9c-3 0-4 2-4 4v42l5-3M14 44V5l40 24-4 6M14 22v-8M14 56v4l40-25-30-18M14 50l24-15-24-14" />
          </svg>
          <span>RUN</span>
        </Watermark>
        <Build><strong>Test Mode</strong><strong>Windows 7</strong><span>Build 7601</span></Build>
      </Desktop>

      <Taskbar>
        <Start>
          <svg width="16" height="16" aria-hidden="true"><path d="M3 3c2-2 4-1 5 0L7 8C5 7 4 7 2 8z" fill="#ea5b2a" /><path d="M9 3c2 1 4 1 6 0l-1 5c-2 1-4 1-6 0z" fill="#7cbb3a" /><path d="M2 9c2-1 3-1 5 0l-1 5c-2-1-3-1-5 0z" fill="#3a86d8" /><path d="M8 9c2 1 4 1 6 0l-1 5c-2 1-4 1-6 0z" fill="#fbc32b" /></svg>
          Start
        </Start>
        <Task aria-label="Internet Explorer"><Mini box={18}><path d="M4 10h10c0-7-10-7-10 0 0 6 8 6 10 2" fill="none" stroke="#35a3e4" strokeWidth="3" /><path d="M2 16C-1 12 10 1 17 3" fill="none" stroke="#f0c02c" /></Mini></Task>
        <Task aria-label="File Explorer"><Mini box={18}><path d="M2 3h6l1 2h7v9H2z" fill="#f5dc85" stroke="#d2ac4a" /><path d="M4 17v-6h10v6h-2v-4H6v4z" fill="#62b0e4" /></Mini></Task>
        <Task aria-label="Media Player"><Mini box={18}><path d="M1.500 1.500h15v15h-15z" fill="#cfe4f7" stroke="#4b86c4" /><circle cx="9" cy="9" r="6" fill="#f0851a" /><path d="M7 6l5 3-5 3z" fill="#fff" /></Mini></Task>
        <Task aria-label="Google Chrome"><Mini><ChromeShape /></Mini></Task>
        <Task aria-label="Microsoft Edge"><Mini><EdgeShape id="et" /></Mini></Task>
        <Task $on aria-label="Outlook"><Mini box={18}><path d="M1.500 1.500h15v15h-15z" fill="#f7cc55" stroke="#c8921d" /><path d="M4.500 3.500h9v11h-9z" fill="#fbe9a8" stroke="#c8921d" /><circle cx="9" cy="9" r="3" fill="none" stroke="#b87a0c" strokeWidth="2" /></Mini></Task>
        <Tray>
          <svg width="17" height="16" aria-hidden="true"><path d="M1.500 5.500h3l4-4v13l-4-4h-3z" fill="#fff" stroke="#6c6a66" /><path d="M11 5c1 2 1 4 0 6M13 3c2 3 2 7 0 10" fill="none" stroke="#6c6a66" /></svg>
          <svg width="17" height="16" aria-hidden="true"><path d="M4.500 4.500h11v8h-11z" fill="#a8a6a2" stroke="#55534f" /><path d="M7 14.500h7" stroke="#55534f" strokeWidth="2" /><path d="M1.500 1v3h4V1M3.500 4v9h4" fill="none" stroke="#55534f" /></svg>
          <svg width="17" height="16" aria-hidden="true"><path d="M2.500 1v14" stroke="#55534f" strokeWidth="2" /><path d="M3.500 2.500h6l1 2h6l-3 5H9l-1-2H3.500z" fill="#fff" stroke="#6c6a66" /></svg>
          <time>8:01 AM</time>
          <svg width="18" height="16" aria-hidden="true"><path d="M1.500 2.500h14v9h-14z" fill="#2c6fd2" stroke="#1c4790" /><path d="M2 3h13L3 9z" fill="#79aaf0" /><path d="M5 13.500h8" stroke="#777" strokeWidth="2" /></svg>
        </Tray>
      </Taskbar>
    </Screen>
  );
}
